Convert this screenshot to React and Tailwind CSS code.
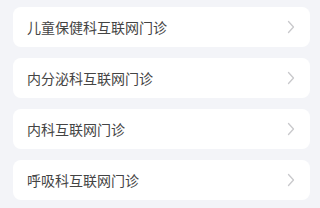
const items = ["儿童保健科互联网门诊", "内分泌科互联网门诊", "内科互联网门诊", "呼吸科互联网门诊"];

const Chevron = () => (
  <svg width="8" height="14" viewBox="0 0 8 14" fill="none">
    <path d="M1.5 1.5 L6.5 7 L1.5 12.5" stroke="#c9c9cc" strokeWidth="1.3" strokeLinecap="round" strokeLinejoin="round" />
  </svg>
);

export default function App() {
  return (
    <div
      className="w-[320px] h-[208px] overflow-hidden bg-[#f3f4f8] pt-[7px] pl-[13px] pr-[10px] flex flex-col gap-[11px]"
      style={{ fontFamily: '"Noto Sans CJK SC", "Noto Sans", sans-serif' }}
    >
      {items.map((t) => (
        <div key={t} className="h-[40px] shrink-0 bg-white rounded-[8px] flex items-center justify-between pl-[14px] pr-[15px]">
          <span className="text-[14px] text-[#444444] leading-none">{t}</span>
          <Chevron />
        </div>
      ))}
    </div>
  );
}
